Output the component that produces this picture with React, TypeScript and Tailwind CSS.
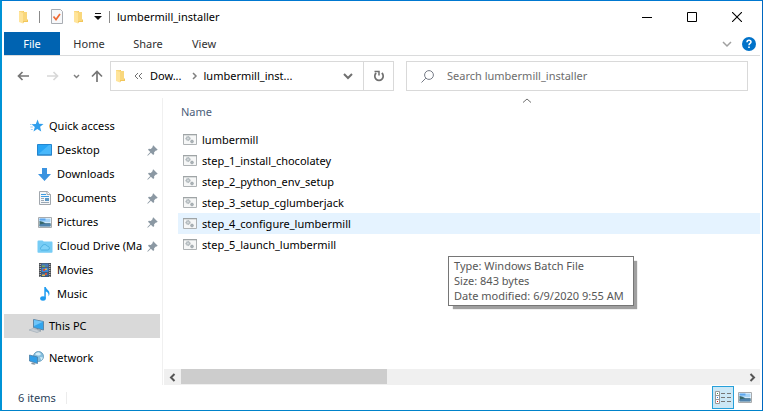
import type { ReactNode } from "react";

function FolderIcon() {
  return (
    <svg width="11" height="14" viewBox="0 0 11 14" aria-hidden="true">
      <path d="M1 1h5v11H1z" fill="#f0bd45" />
      <path d="M1 1h4l1 1h3v9.500H1z" fill="#f9d77c" />
      <path d="M1 1.500l4 1.500v10.500L1 12z" fill="#ffe49a" />
      <path d="M5 13.500V11h4V9.500h1V12H6z" fill="#f2c65a" />
    </svg>
  );
}

function CheckPageIcon() {
  return (
    <svg width="12" height="15" viewBox="0 0 12 15" aria-hidden="true">
      <path d="M.5.500h9l2 2v12H.5z" fill="#f7f8fa" stroke="#a9adb3" />
      <path d="M2.500 7.500l2.500 3 4-5.500" fill="none" stroke="#ee6a35" strokeWidth="1.700" />
    </svg>
  );
}

function BatchIcon() {
  return (
    <svg width="14" height="11" viewBox="0 0 14 11" aria-hidden="true">
      <path d="M.5.500h13v10H.5z" fill="#f6f7f7" stroke="#aeb2b4" />
      <path d="M0 0h14v1.300H0z" fill="#9fa4a6" />
      <circle cx="5" cy="4.500" r="2.100" fill="#b9c0c4" stroke="#aab2b6" strokeDasharray="1.200 .6" />
      <circle cx="5" cy="4.500" r=".7" fill="#e5e8ea" />
      <circle cx="9" cy="7.500" r="1.400" fill="#abb3b7" stroke="#9fa7ab" strokeWidth=".8" />
    </svg>
  );
}

function PinIcon() {
  return (
    <svg width="11" height="11" viewBox="0 0 11 11" aria-hidden="true">
      <path d="M6.200.300l4.500 4.500-1.100.7-.7-.1-1.800 1.800.1 1.900-1 .9L3.900 7.700.8 10.700l-.5-.5 3-3.100L1 4.800l.9-1 1.900.1L5.700 2l-.1-.8z" fill="#8b98a3" />
    </svg>
  );
}

function StarIcon() {
  return (
    <svg width="14" height="14" viewBox="0 0 14 14" aria-hidden="true">
      <path d="M7.600.600l1.500 4.100 4.400.2-3.400 2.800 1.100 4.700-3.900-2.500-3.800 2.500 1.300-4.500L1.500 5.200l4.300-.3z" fill="#2f9eec" />
      <path d="M.3 8h2.500M.8 10.500h2M0 5.500h1.500" stroke="#9fd0f5" />
    </svg>
  );
}

function DesktopIcon() {
  return (
    <svg width="15" height="12" viewBox="0 0 15 12" aria-hidden="true">
      <path d="M.5.500h14v10.500H.5z" fill="#28a5f5" stroke="#2386d0" />
      <path d="M1 10.500L12 1h2v9.500z" fill="#49b8fb" />
      <path d="M0 10.500h15v1H0z" fill="#2b7ec0" />
    </svg>
  );
}

function DownloadIcon() {
  return (
    <svg width="13" height="13" viewBox="0 0 13 13" aria-hidden="true">
      <path d="M4 0h5v6h4l-6.500 7L0 6h4z" fill="#3b93e0" />
    </svg>
  );
}

function DocumentIcon() {
  return (
    <svg width="12" height="14" viewBox="0 0 12 14" aria-hidden="true">
      <path d="M.5.500h8l3 3v10H.5z" fill="#f4f6f8" stroke="#a1a7ad" />
      <path d="M8 .500v3h3.500" fill="#fff" stroke="#a1a7ad" />
      <path d="M2 3.500h5M2 5.500h8" stroke="#3d9be0" />
      <path d="M2 7.500h3M2 9.500h3M2 11.500h8" stroke="#9aa8b5" />
      <path d="M6 7h4v3H6z" fill="#5c98c6" />
    </svg>
  );
}

function PictureIcon() {
  return (
    <svg width="14" height="11" viewBox="0 0 14 11" aria-hidden="true">
      <path d="M.5.500h13v10H.5z" fill="#fff" stroke="#a7abae" />
      <path d="M1.500 1.500h11v4h-11z" fill="#a6d4f8" />
      <path d="M1.500 1.500h6v2h-6z" fill="#5da6ee" />
      <path d="M1.500 4l3 .8 3 1.500h5v3h-11z" fill="#37676a" />
      <path d="M1.500 7.500l5-1h6v3h-11z" fill="#4e82ad" />
    </svg>
  );
}

function CloudFolderIcon() {
  return (
    <svg width="16" height="13" viewBox="0 0 16 13" aria-hidden="true">
      <path d="M.5 1.500q0-1 1-1h4l1.200 1h8q.8 0 .8 1V12q0 .8-.8.8H1.300Q.5 12.800.5 12z" fill="#76ccf5" />
      <path d="M4.500 10a1.700 1.700 0 01.2-3.200 3 3 0 015.500-.8 2.200 2.200 0 011.200 4z" fill="#80d2f8" stroke="#43a9dc" strokeWidth=".8" />
    </svg>
  );
}

function MovieIcon() {
  return (
    <svg width="12" height="14" viewBox="0 0 12 14" aria-hidden="true">
      <path d="M0 0h12v14H0z" fill="#4b4e52" />
      <path d="M1.200 1v13M10.800 1v13" stroke="#d5d7d9" strokeDasharray="1 1" />
      <path d="M2.500.500h7v4h-7z" fill="#477bb9" />
      <path d="M2.500 5h7v4h-7z" fill="#3d86d6" />
      <path d="M2.500 9.500h7v4h-7z" fill="#3467a2" />
      <path d="M4 6h2v2H4zM6 10h2v2H6z" fill="#d8513a" />
      <path d="M6 5.500h2v1.500H6zM3 11.500h3V13H3z" fill="#e1b84c" />
      <path d="M3 2.500h3V4H3z" fill="#75a857" />
    </svg>
  );
}

function MusicIcon() {
  return (
    <svg width="10" height="14" viewBox="0 0 10 14" aria-hidden="true">
      <ellipse cx="3" cy="11.500" rx="2.800" ry="2.200" fill="#1d9bf0" />
      <path d="M4.300 0h1.500c.2 2.500 4 3 3.700 7-.1 1-.5 1.700-1 2.200.5-3-1-4-2.700-4.600v7H4.300z" fill="#1d9bf0" />
    </svg>
  );
}

function ComputerIcon() {
  return (
    <svg width="16" height="14" viewBox="0 0 16 14" aria-hidden="true">
      <path d="M4.500.500l10 2v8.500l-10-2.500z" fill="#31a4ec" stroke="#5c87a8" />
      <path d="M5 1l9 1.800L5 7z" fill="#6fc5f8" />
      <path d="M8 10l4 1v1.500l-4-1z" fill="#8e9ba6" />
      <path d="M0 11l4-1.500 8 2.500-4 1.500z" fill="#c7ced5" stroke="#9ba7b2" strokeWidth=".6" />
    </svg>
  );
}

function NetworkIcon() {
  return (
    <svg width="15" height="14" viewBox="0 0 15 14" aria-hidden="true">
      <circle cx="9.500" cy="5.500" r="5" fill="#86bfdf" stroke="#5b93b4" strokeWidth=".8" />
      <path d="M6 3q3.500-3.500 6 0-1 2-3 1.500T6 3zM11 6l3 .5-1.500 3z" fill="#d6eef8" />
      <path d="M.5 4l8 2v6.500l-8-2.500z" fill="#2f9ee8" stroke="#4a7fa6" strokeWidth=".8" />
      <path d="M3 11.500l4 1.200-1.500 1.100L2 13z" fill="#8695a1" />
    </svg>
  );
}

function Chevron({ d, color, width = 10, height = 10, stroke = 1.5 }: { d: string; color: string; width?: number; height?: number; stroke?: number }) {
  return (
    <svg width={width} height={height} viewBox={`0 0 ${width} ${height}`} aria-hidden="true">
      <path d={d} fill="none" stroke={color} strokeWidth={stroke} />
    </svg>
  );
}

type Place = { label: string; icon: ReactNode; pinned?: boolean };

const quickAccess: Place[] = [
  { label: "Desktop", icon: <DesktopIcon />, pinned: true },
  { label: "Downloads", icon: <DownloadIcon />, pinned: true },
  { label: "Documents", icon: <DocumentIcon />, pinned: true },
  { label: "Pictures", icon: <PictureIcon />, pinned: true },
  { label: "iCloud Drive (Ma", icon: <CloudFolderIcon />, pinned: true },
  { label: "Movies", icon: <MovieIcon /> },
  { label: "Music", icon: <MusicIcon /> },
];

const files = [
  "lumbermill",
  "step_1_install_chocolatey",
  "step_2_python_env_setup",
  "step_3_setup_cglumberjack",
  "step_4_configure_lumbermill",
  "step_5_launch_lumbermill",
];

function RootPlace({ label, icon, selected }: { label: string; icon: ReactNode; selected?: boolean }) {
  return (
    <button type="button" className={`flex h-6 w-full items-center gap-1 pl-6 text-left ${selected ? "bg-[#d9d9d9]" : ""}`}>
      <span className="flex w-[17px] shrink-0 justify-center">{icon}</span>
      {label}
    </button>
  );
}

function NavPane() {
  return (
    <nav aria-label="Folders" className="flex w-[161px] shrink-0 flex-col gap-2 border-r border-[#f0f0f0] pt-4 pl-0.5 pr-0.5">
      <div>
        <RootPlace label="Quick access" icon={<StarIcon />} />
        <ul>
          {quickAccess.map((place) => (
            <li key={place.label}>
              <button type="button" className="flex h-6 w-full items-center gap-1 pl-8 pr-0.5 text-left">
                <span className="flex w-[17px] shrink-0 justify-center">{place.icon}</span>
                <span className="min-w-0 flex-1 whitespace-nowrap">{place.label}</span>
                {place.pinned && <span className="-ml-0.5 shrink-0"><PinIcon /></span>}
              </button>
            </li>
          ))}
        </ul>
      </div>
      <RootPlace label="This PC" icon={<ComputerIcon />} selected />
      <RootPlace label="Network" icon={<NetworkIcon />} />
    </nav>
  );
}

function FilePane() {
  return (
    <section className="relative flex min-w-0 flex-1 flex-col pl-px pr-0.5">
      <div className="flex-1 pl-3.5">
        <div className="flex h-1 pl-[344px]">
          <Chevron d="M1 4.500L5 1l4 3.500" color="#6d6d6d" height={5} stroke={1} />
        </div>
        <table className="w-full">
          <thead>
            <tr>
              <th scope="col" className="h-[27px] pb-2 pl-[3px] text-left font-normal leading-4 text-[#4c607a]">Name</th>
            </tr>
          </thead>
          <tbody>
            {files.map((file) => (
              <tr key={file} className={file === "step_4_configure_lumbermill" ? "bg-[#e5f3ff]" : ""}>
                <td className="h-[21px] p-0 pl-[5px]">
                  <span className="flex items-center gap-[5px] leading-[21px]">
                    <BatchIcon />
                    {file}
                  </span>
                </td>
              </tr>
            ))}
          </tbody>
        </table>
      </div>
      <div className="flex h-4 bg-[#f0f0f0]">
        <button type="button" aria-label="Scroll left" className="flex w-[17px] items-center justify-center">
          <Chevron d="M6.500 1L3 4.500 6.500 8" color="#555" height={9} stroke={2} />
        </button>
        <div className="flex-1 pb-px">
          <div className="h-full w-[206px] bg-[#cdcdcd]" />
        </div>
        <button type="button" aria-label="Scroll right" className="flex w-[17px] items-center justify-center">
          <Chevron d="M3.500 1L7 4.500 3.500 8" color="#555" height={9} stroke={2} />
        </button>
      </div>
      <div role="tooltip" className="absolute top-[158px] left-[285px] min-w-[186px] whitespace-pre border border-[#767676] bg-white px-[5px] pt-px pb-0.5 leading-[15px] text-[#575757] shadow-[4px_4px_1px_-1px_#a0a0a0]">
        {"Type: Windows Batch File\nSize: 843 bytes\nDate modified: 6/9/2020 9:55 AM"}
      </div>
    </section>
  );
}

export default function App() {
  return (
    <div className="flex min-h-screen flex-col border-t border-r border-b border-l-2 border-t-[#0078d0] border-r-[#0067c0] border-b-[#0083ca] border-l-[#0093d6] bg-white font-['Noto_Sans','Open_Sans',sans-serif] text-[11px] leading-4 text-black">
      <header className="flex h-[31px] items-center">
        <div className="flex items-center pl-4">
          <FolderIcon />
          <span className="ml-[10px] h-3 w-px bg-[#8a8a8a]" />
          <button type="button" aria-label="Properties" className="ml-[11px]"><CheckPageIcon /></button>
          <button type="button" aria-label="New folder" className="ml-[10px]"><FolderIcon /></button>
          <button type="button" aria-label="Customize Quick Access Toolbar" className="ml-[10px]">
            <svg width="8" height="8" viewBox="0 0 8 8" aria-hidden="true"><path d="M1 0h6v1H1zM0 3h8L4 7z" fill="#111" /></svg>
          </button>
          <span className="ml-[7px] h-3 w-px bg-[#8a8a8a]" />
        </div>
        <h1 className="ml-[7px] flex-1">lumbermill_installer</h1>
        <button type="button" aria-label="Minimize" className="flex h-full w-[45px] items-center justify-center"><Chevron d="M0 5.500h10" color="#000" stroke={1} /></button>
        <button type="button" aria-label="Maximize" className="flex h-full w-[45px] items-center justify-center"><Chevron d="M.5.500h9v9h-9z" color="#000" stroke={1} /></button>
        <button type="button" aria-label="Close" className="mr-[3px] flex h-full w-[45px] items-center justify-center"><Chevron d="M0 0l10 10M10 0L0 10" color="#000" stroke={1.1} /></button>
      </header>
      <div className="mr-0.5 ml-0.5 flex h-6 items-center border-b border-[#dadbdc] text-[#303030]">
        <button type="button" className="h-full w-14 bg-[#0063b1] text-white">File</button>
        <button type="button" className="h-full w-[58px]">Home</button>
        <button type="button" className="h-full w-[60px]">Share</button>
        <button type="button" className="h-full w-[52px]">View</button>
        <div className="flex-1" />
        <button type="button" aria-label="Expand the Ribbon" className="mr-2.5"><Chevron d="M1 3l4 4 4-4" color="#a0a0a0" /></button>
        <button type="button" aria-label="Help" className="mr-1">
          <svg width="14" height="14" viewBox="0 0 14 14" aria-hidden="true">
            <circle cx="7" cy="7" r="7" fill="#0072c9" />
            <path d="M5 5.200q0-2 2-2t2 1.800c0 1.500-2 1.300-2 3.200" fill="none" stroke="#fff" strokeWidth="1.500" />
            <path d="M6.200 9.500h1.600V11H6.200z" fill="#fff" />
          </svg>
        </button>
      </div>
      <div className="flex items-center pt-[5px] pr-3.5 pb-[7px]">
        <div className="flex w-[108px] shrink-0 items-center pl-[15px]">
          <button type="button" aria-label="Back"><Chevron d="M12 5H1.500M5.500 1l-4 4 4 4" color="#767676" width={12} stroke={1.7} /></button>
          <button type="button" aria-label="Forward" className="ml-[18px]"><Chevron d="M0 5h10.500M6.500 1l4 4-4 4" color="#d8d8d8" width={12} stroke={1.7} /></button>
          <button type="button" aria-label="Recent locations" className="ml-3.5"><Chevron d="M1 1l2.500 2.500L6 1" color="#808080" width={7} height={5} /></button>
          <button type="button" aria-label="Up" className="ml-[11px]"><Chevron d="M6 12V1.500M1 6.500l5-5 5 5" color="#767676" width={12} height={12} stroke={1.7} /></button>
        </div>
        <div className="grid flex-1 grid-cols-[284fr_342fr] gap-3">
          <div className="flex h-[30px] items-center border border-[#d9d9d9]">
            <span className="ml-1"><FolderIcon /></span>
            <span className="ml-2"><Chevron d="M4 1L1 4l3 3M8 1L5 4l3 3" color="#707070" height={8} stroke={1} /></span>
            <button type="button" className="ml-1.5">Dow...</button>
            <span className="ml-2.5"><Chevron d="M1 1l3 3-3 3" color="#808080" width={6} height={8} /></span>
            <button type="button" className="ml-1.5">lumbermill_inst...</button>
            <div className="flex-1" />
            <button type="button" aria-label="Previous locations" className="mr-2.5"><Chevron d="M1 2l4 4 4-4" color="#707070" height={8} stroke={2} /></button>
            <button type="button" aria-label="Refresh" className="flex h-full w-[30px] items-center justify-center border-l border-[#d9d9d9]">
              <svg width="12" height="12" viewBox="0 0 12 12" aria-hidden="true">
                <path d="M8.800 3A4.200 4.200 0 113.200 3" fill="none" stroke="#707070" strokeWidth="1.700" />
                <path d="M1.500 1.500H6v4" fill="none" stroke="#707070" strokeWidth="1.500" />
              </svg>
            </button>
          </div>
          <label className="flex h-[30px] items-center border border-[#d9d9d9] pl-3.5">
            <svg width="13" height="13" viewBox="0 0 13 13" aria-hidden="true">
              <circle cx="8" cy="5" r="4.400" fill="none" stroke="#767b86" />
              <path d="M4.800 8.200L.5 12.500" stroke="#767b86" />
            </svg>
            <input type="text" aria-label="Search lumbermill_installer" placeholder="Search lumbermill_installer" className="ml-[13px] min-w-0 flex-1 outline-none placeholder:text-[#6d6d6d]" />
          </label>
        </div>
      </div>
      <main className="flex flex-1">
        <NavPane />
        <FilePane />
      </main>
      <footer className="flex h-[25px] items-center pl-4 text-[#2b3f5a]">
        <span>6 items</span>
        <span className="ml-2.5 h-3 w-px bg-[#ececec]" />
        <div className="flex-1" />
        <button type="button" aria-label="Details view" aria-pressed="true" className="flex h-[23px] w-[22px] items-center justify-center border border-[#26a0da] bg-[#cce8f6]">
          <svg width="16" height="13" viewBox="0 0 16 13" aria-hidden="true">
            <path d="M.5.500h4v12h-4zM.5 4.500h4M.5 8.500h4" fill="#fff" stroke="#999" />
            <path d="M2 2h1v1H2z" fill="#3b8a4a" /><path d="M2 6h1v1H2z" fill="#2878e0" /><path d="M2 10h1v1H2z" fill="#d11" />
            <path d="M6 2.500h4M12 2.500h4M6 6.500h4M12 6.500h4M6 10.500h4M12 10.500h4" stroke="#777" />
          </svg>
        </button>
        <button type="button" aria-label="Large icons view" className="mr-2.5 ml-1"><PictureIcon /></button>
      </footer>
    </div>
  );
}
